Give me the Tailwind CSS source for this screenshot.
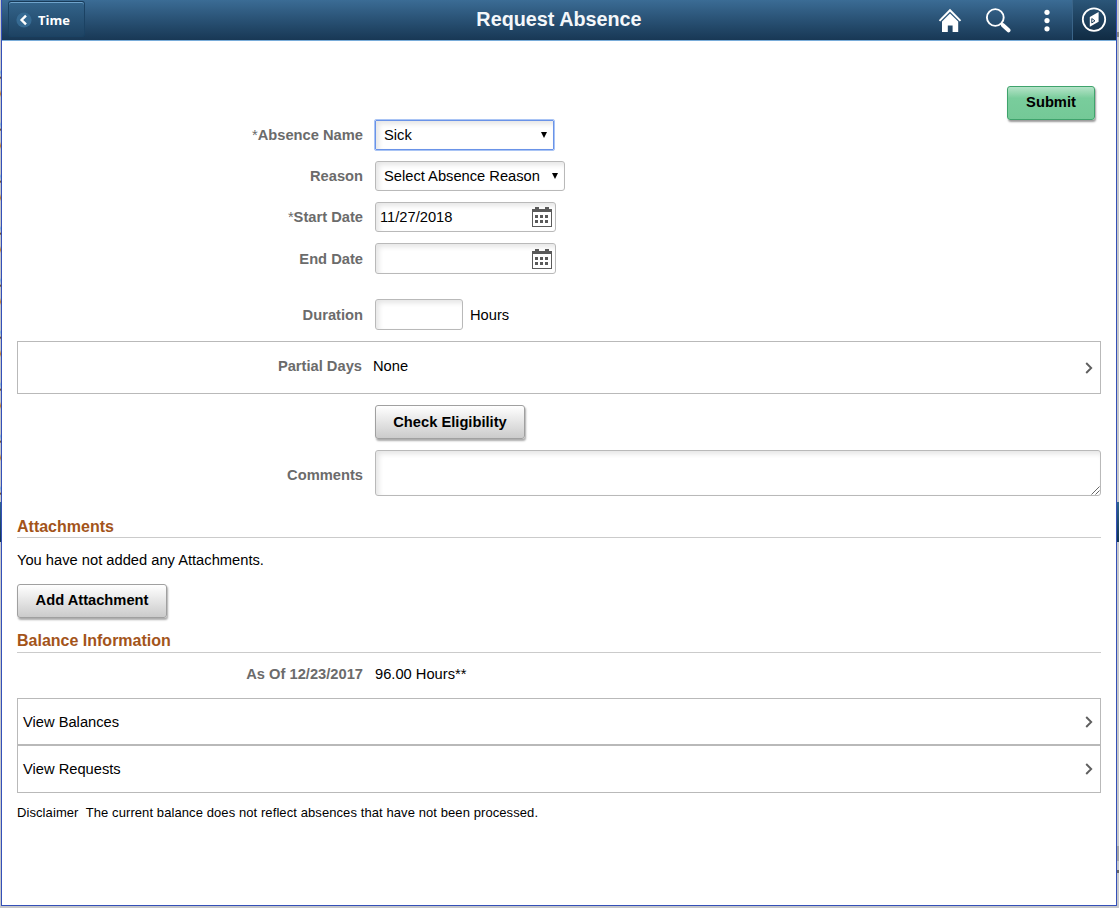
<!DOCTYPE html>
<html lang="en">
<head>
    <meta charset="UTF-8">
    <meta name="viewport" content="width=device-width, initial-scale=1.0">
    <title>Request Absence</title>
    <script src="https://cdn.jsdelivr.net/npm/@tailwindcss/browser@4"></script>
</head>
<body class="h-[908px] overflow-hidden bg-[#c6c7ca] flex font-['Liberation_Sans',Arial,sans-serif] text-[14.7px] leading-[18px] text-black">
    <!-- page behind, left edge -->
    <div class="w-px flex flex-col shrink-0">
        <div class="h-[60px]"></div>
        <div class="h-[442px] bg-[repeating-linear-gradient(to_bottom,#c6c7ca_0px,#c6c7ca_10px,#7fb0e0_12px,#c6c7ca_16px,#4a2a10_18px,#c6c7ca_19px,#c6c7ca_30px,#c07a28_34px,#c6c7ca_37px,#c6c7ca_52px)]"></div>
        <div class="h-[40px] bg-linear-to-b from-[#2f648e] to-[#123450]"></div>
    </div>

    <div id="window" class="w-[1116px] h-[906px] shrink-0 bg-white border border-t-0 border-[#3450b8]">
        <header class="h-[41px] flex items-start bg-linear-to-b from-[#3b6c95] to-[#183855] border-b border-[#79acd9]">
            <div class="w-[370px] pt-px pl-[6px]">
                <button class="w-[77px] h-[36px] rounded-[3px] border border-[#1b4263] border-t-[#173a58] bg-linear-to-b from-[#33648b] to-[#1e4363] shadow-[inset_0_1px_0_#6fa3cb] flex items-center pl-[7px] pt-px text-white font-['Open_Sans',sans-serif] font-bold text-[13px]">
                    <svg width="16" height="16" viewBox="0 0 16 16" class="mr-[6px]"><circle cx="8" cy="8" r="7.6" fill="#366a92"/><path d="M10 3.6L5.6 8L10 12.4" fill="none" stroke="#fff" stroke-width="2.4"/></svg>
                    <span>Time</span>
                </button>
            </div>
            <h1 class="w-[374px] pt-[7px] text-center text-[19.8px] leading-[24px] font-bold text-[#f4f7fa]">Request Absence</h1>
            <div class="flex-1 flex justify-end h-[40px]">
                <svg width="24" height="24" viewBox="0 0 24 24" class="mt-[8px] mr-[23px]" fill="#fff"><path d="M12 .8L23.2 12.2L21.8 13.5L12 3.8L2.2 13.5L.8 12.2Z"/><path d="M12 5.5L20.2 13.5V24H14.6V17.5H9.8V24H4V13.5Z"/></svg>
                <svg width="26" height="26" viewBox="0 0 26 26" class="mt-[8px] mr-[32px]" fill="none" stroke="#fff"><circle cx="10.3" cy="9.5" r="8.4" stroke-width="1.9"/><path d="M16 15.3L18.4 17.7" stroke-width="2.2"/><path d="M18 17.2L23.5 22.3" stroke-width="4" stroke-linecap="round"/></svg>
                <svg width="8" height="24" viewBox="0 0 8 24" class="mt-[8px] mr-[21px]" fill="#fff"><circle cx="4" cy="4.3" r="2.6"/><circle cx="4" cy="12.6" r="2.6"/><circle cx="4" cy="20.8" r="2.6"/></svg>
                <div class="w-[44px] h-[40px] bg-linear-to-b from-[#2b5679] to-[#102b43] border-l border-[#3a6488] flex justify-center pr-px">
                    <svg width="26" height="26" viewBox="0 0 26 26" class="mt-[7px]"><circle cx="13" cy="12.6" r="11.2" fill="none" stroke="#fff" stroke-width="1.8"/><path d="M8.8 9.9L17.6 5V14.8L8.8 19.8Z" fill="#fff"/><path d="M10.8 11.6L14 13.8L10.8 16Z" fill="#fff" stroke="#1c3e5a" stroke-width="1"/></svg>
                </div>
            </div>
        </header>

        <main class="px-[15px] flex flex-col">
            <button class="mt-[45px] mr-[6px] self-end w-[88px] h-[34px] pb-[2px] rounded-[3px] border border-[#3fa36c] bg-linear-to-b from-[#b4e3c8] from-0% via-[#79cd9c] via-35% to-[#74c997] shadow-[1px_2px_2px_#00000066] font-bold">Submit</button>

            <div class="flex items-center h-[30px]">
                <label class="w-[346px] mr-[12px] text-right font-bold text-[#6b6b6b]"><span class="font-normal">*</span>Absence Name</label>
                <div class="w-[179px] h-[30px] border border-[#6a93e8] outline outline-[#a9c4f5] rounded-[1px] shadow-[inset_3px_3px_5px_#0000001a] flex items-center justify-between pl-[8px] pr-[6px]">
                    <span>Sick</span>
                    <svg width="6" height="6" viewBox="0 0 7 6" preserveAspectRatio="none"><path d="M0 0H7L3.5 6Z"/></svg>
                </div>
            </div>
            <div class="mt-[11px] flex items-center h-[30px]">
                <label class="w-[346px] mr-[12px] text-right font-bold text-[#6b6b6b]">Reason</label>
                <div class="w-[190px] h-[30px] border border-[#b9b9b9] rounded-[3px] shadow-[inset_3px_3px_5px_#0000001a] flex items-center justify-between pl-[8px] pr-[6px]">
                    <span>Select Absence Reason</span>
                    <svg width="6" height="6" viewBox="0 0 7 6" preserveAspectRatio="none"><path d="M0 0H7L3.5 6Z"/></svg>
                </div>
            </div>
            <div class="mt-[11px] flex items-center h-[30px]">
                <label class="w-[346px] mr-[12px] text-right font-bold text-[#6b6b6b]"><span class="font-normal">*</span>Start Date</label>
                <div class="w-[181px] h-[30px] border border-[#b9b9b9] rounded-[3px] shadow-[inset_3px_3px_5px_#0000001a] flex items-center justify-between pl-[4px] pr-[3px]">
                    <span>11/27/2018</span>
                    <svg width="20" height="20" viewBox="0 0 20 20" fill="#5a5a5a"><path d="M0 2H3V0H7V2H13V0H17V2H20V20H0ZM1 5V19H19V5Z" fill-rule="evenodd"/><path d="M3 8h3v3H3zM8 8h3v3H8zM13 8h3v3H13zM3 13h3v3H3zM8 13h3v3H8zM13 13h3v3H13z"/></svg>
                </div>
            </div>
            <div class="mt-[11px] flex items-center h-[31px]">
                <label class="w-[346px] mr-[12px] text-right font-bold text-[#6b6b6b]">End Date</label>
                <div class="w-[181px] h-[31px] border border-[#b9b9b9] rounded-[3px] shadow-[inset_3px_3px_5px_#0000001a] flex items-center justify-end pr-[3px]">
                    <svg width="20" height="20" viewBox="0 0 20 20" fill="#5a5a5a"><path d="M0 2H3V0H7V2H13V0H17V2H20V20H0ZM1 5V19H19V5Z" fill-rule="evenodd"/><path d="M3 8h3v3H3zM8 8h3v3H8zM13 8h3v3H13zM3 13h3v3H3zM8 13h3v3H8zM13 13h3v3H13z"/></svg>
                </div>
            </div>
            <div class="mt-[25px] flex items-center h-[31px]">
                <label class="w-[346px] mr-[12px] text-right font-bold text-[#6b6b6b]">Duration</label>
                <div class="w-[88px] h-[31px] border border-[#b9b9b9] rounded-[3px] shadow-[inset_3px_3px_5px_#0000001a]"></div>
                <span class="ml-[7px]">Hours</span>
            </div>

            <!-- partial days row -->
            <div class="mt-[11px] h-[53px] border border-[#b9b9b9] flex items-center pr-[7px]">
                <label class="w-[344px] mr-[11px] pb-[3px] text-right font-bold text-[#6b6b6b]">Partial Days</label>
                <span class="flex-1 pb-[3px]">None</span>
                <svg width="8" height="12" viewBox="0 0 8 12"><path d="M1.2 1L6.2 6L1.2 11" fill="none" stroke="#5f5f5f" stroke-width="1.9"/></svg>
            </div>

            <button class="mt-[11px] ml-[358px] w-[150px] h-[34px] rounded-[3px] border border-[#a0a0a0] bg-linear-to-b from-white to-[#cbcbcb] shadow-[1px_2px_2px_#00000055] font-bold">Check Eligibility</button>

            <div class="mt-[11px] flex items-center h-[46px]">
                <label class="w-[346px] mr-[12px] pt-[4px] text-right font-bold text-[#6b6b6b]">Comments</label>
                <div class="flex-1 h-[46px] border border-[#b9b9b9] rounded-[3px] shadow-[inset_3px_3px_5px_#0000001a] flex items-end justify-end">
                    <svg width="9" height="9" viewBox="0 0 9 9"><path d="M.5 8.5L8.5 .5M4.5 8.5L8.5 4.5" fill="none" stroke="#555" stroke-width=".9"/></svg>
                </div>
            </div>

            <h2 class="mt-[21px] h-[21px] text-[16px] leading-[20px] font-bold text-[#a3541a] border-b border-[#cbcbcb]">Attachments</h2>
            <p class="mt-[13px]">You have not added any Attachments.</p>
            <button class="mt-[15px] w-[150px] h-[34px] pb-[2px] rounded-[3px] border border-[#a0a0a0] bg-linear-to-b from-white to-[#cbcbcb] shadow-[1px_2px_2px_#00000055] font-bold">Add Attachment</button>

            <h2 class="mt-[13px] h-[22px] text-[16px] leading-[20px] font-bold text-[#a3541a] border-b border-[#cbcbcb]">Balance Information</h2>
            <div class="mt-[12px] flex h-[18px]">
                <label class="w-[346px] mr-[12px] text-right font-bold text-[#6b6b6b]">As Of 12/23/2017</label>
                <span>96.00 Hours**</span>
            </div>

            <div class="mt-[15px] h-[47px] border border-[#b9b9b9] flex items-center justify-between pl-[5px] pr-[7px]">
                <span>View Balances</span>
                <svg width="8" height="12" viewBox="0 0 8 12"><path d="M1.2 1L6.2 6L1.2 11" fill="none" stroke="#5f5f5f" stroke-width="1.9"/></svg>
            </div>
            <div class="h-[48px] border border-[#b9b9b9] flex items-center justify-between pl-[5px] pr-[7px]">
                <span>View Requests</span>
                <svg width="8" height="12" viewBox="0 0 8 12"><path d="M1.2 1L6.2 6L1.2 11" fill="none" stroke="#5f5f5f" stroke-width="1.9"/></svg>
            </div>
            <p class="mt-[11px] text-[13px] tracking-[0.087px] whitespace-pre">Disclaimer  The current balance does not reflect absences that have not been processed.</p>
        </main>
    </div>

    <!-- page behind, right edge -->
    <div class="w-[2px] shrink-0 flex flex-col">
        <div class="h-[32px]"></div>
        <div class="h-[5px] bg-[#858585]"></div>
        <div class="mt-[465px] h-[40px] bg-linear-to-b from-[#2f648e] to-[#123450]"></div>
        <div class="mt-[304px] h-[15px] bg-[#a3a3a5]"></div>
        <div class="mt-[9px] h-[3px] bg-[#666]"></div>
    </div>
</body>
</html>
